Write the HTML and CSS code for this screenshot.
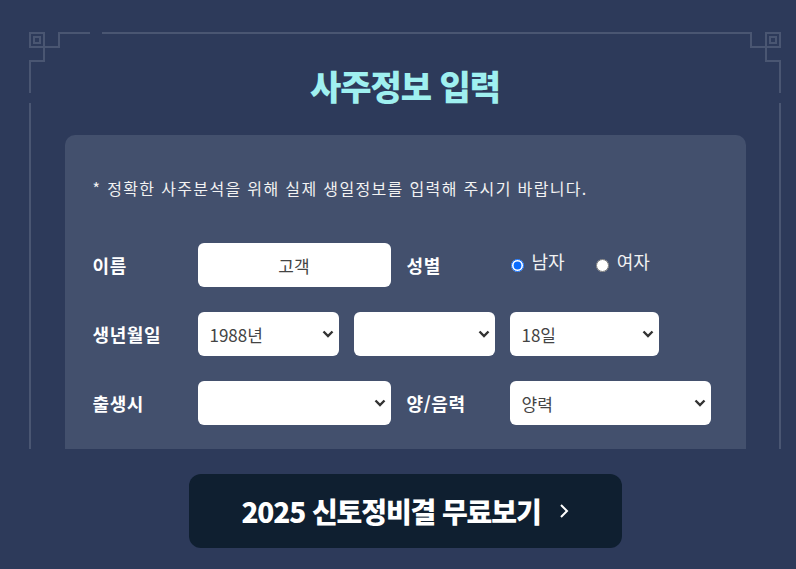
FILE: index.html
```html
<!DOCTYPE html>
<html lang="ko">
<head>
<meta charset="utf-8">
<link rel="stylesheet" href="styles.css">
</head>
<body>
<div class="wrap">
  <svg class="frame" width="810" height="449" viewBox="0 0 810 449" aria-hidden="true">
    <g class="frame-lines">
      <path d="M58 33 H90 M102 33 H752"/>
      <path d="M59 33 V47 H30 M44 33 V61 H30 V93 M30 103 V449"/>
      <rect x="30" y="33" width="14" height="14"/>
      <rect x="34" y="37" width="6" height="6"/>
      <g transform="translate(810 0) scale(-1 1)">
        <path d="M59 33 V47 H30 M44 33 V61 H30 V93 M30 103 V449"/>
        <rect x="30" y="33" width="14" height="14"/>
        <rect x="34" y="37" width="6" height="6"/>
      </g>
    </g>
  </svg>

  <h1 class="title">사주정보 입력</h1>

  <section class="card">
    <p class="notice">* 정확한 사주분석을 위해 실제 생일정보를 입력해 주시기 바랍니다.</p>

    <div class="row">
      <span class="label">이름</span>
      <input class="field field-name" type="text" value="고객">
      <span class="label label-2">성별</span>
      <div class="radios">
        <label class="radio"><input type="radio" name="gender" checked> 남자</label>
        <label class="radio"><input type="radio" name="gender"> 여자</label>
      </div>
    </div>

    <div class="row">
      <span class="label">생년월일</span>
      <div class="select sel-year"><select class="field"><option>1988년</option></select><svg class="chev" width="12" height="8" viewBox="0 0 12 8"><path d="M1.5 1.5 L6 6 L10.5 1.5"/></svg></div>
      <div class="select sel-month gap"><select class="field"><option></option></select><svg class="chev" width="12" height="8" viewBox="0 0 12 8"><path d="M1.5 1.5 L6 6 L10.5 1.5"/></svg></div>
      <div class="select sel-day gap"><select class="field"><option>18일</option></select><svg class="chev" width="12" height="8" viewBox="0 0 12 8"><path d="M1.5 1.5 L6 6 L10.5 1.5"/></svg></div>
    </div>

    <div class="row">
      <span class="label">출생시</span>
      <div class="select sel-time"><select class="field"><option></option></select><svg class="chev" width="12" height="8" viewBox="0 0 12 8"><path d="M1.5 1.5 L6 6 L10.5 1.5"/></svg></div>
      <span class="label label-2">양/음력</span>
      <div class="select sel-cal"><select class="field"><option>양력</option></select><svg class="chev" width="12" height="8" viewBox="0 0 12 8"><path d="M1.5 1.5 L6 6 L10.5 1.5"/></svg></div>
    </div>
  </section>

  <button class="cta" type="button">
    <span>2025 신토정비결 무료보기</span>
    <svg class="cta-arrow" width="10" height="16" viewBox="0 0 10 16"><path d="M2 2 L8 8 L2 14"/></svg>
  </button>
</div>
</body>
</html>
```
FILE: styles.css
```css
html, body {
  margin: 0;
  padding: 0;
  background: #2d3a5a;
  overflow: hidden;
}
body {
  font-family: "Noto Sans CJK KR", "Noto Sans", sans-serif;
  color: #fff;
}
.wrap {
  position: relative;
  width: 810px;
  height: 569px;
  padding-top: 62px;
  box-sizing: border-box;
}
.frame {
  position: absolute;
  left: 0;
  top: 0;
}
.frame-lines path,
.frame-lines rect {
  fill: none;
  stroke: #4a5672;
  stroke-width: 2;
}
.title {
  margin: 0;
  height: 48px;
  line-height: 48px;
  text-align: center;
  font-size: 34px;
  font-weight: 900;
  letter-spacing: -1px;
  color: #9ff0f0;
}
.card {
  position: relative;
  width: 681px;
  margin: 25px auto 0;
  box-sizing: border-box;
  padding: 42px 28px 24px;
  background: #43506d;
  border-radius: 10px 10px 0 0;
}
.notice {
  margin: 0 0 44px;
  height: 22px;
  line-height: 22px;
  font-size: 16px;
  letter-spacing: 1.35px;
  color: #f2f2f2;
}
.row {
  display: flex;
  align-items: center;
  height: 44px;
}
.row + .row {
  margin-top: 25px;
}
.label {
  width: 105px;
  flex: none;
  font-size: 18px;
  font-weight: 700;
  letter-spacing: 0.6px;
}
.label-2 {
  width: 103px;
  margin-left: 16px;
}
.field {
  height: 44px;
  box-sizing: border-box;
  border: none;
  border-radius: 6px;
  background: #fff;
  font-family: "Noto Sans CJK KR", "Noto Sans", sans-serif;
  font-size: 17px;
  color: #444;
  padding: 0 12px;
  outline: none;
}
.field-name {
  width: 193px;
  text-align: center;
}
.select {
  position: relative;
  flex: none;
  height: 44px;
}
.select select {
  width: 100%;
  appearance: none;
  -webkit-appearance: none;
}
.chev {
  position: absolute;
  right: 5px;
  top: 18px;
  pointer-events: none;
}
.chev path {
  fill: none;
  stroke: #333;
  stroke-width: 2.4;
}
.gap { margin-left: 15px; }
.sel-year, .sel-month { width: 141px; }
.sel-day { width: 149px; }
.sel-time { width: 193px; }
.sel-cal { width: 201px; }
.radios {
  display: flex;
  align-items: center;
  gap: 30px;
  margin-top: -9px;
}
.radio {
  display: flex;
  align-items: center;
  font-size: 18px;
  color: #f2f2f2;
}
.radio input {
  margin: 9px 8px 0 1px;
  width: 13px;
  height: 13px;
  accent-color: #0a6cff;
}
.cta {
  display: flex;
  align-items: center;
  justify-content: center;
  gap: 18px;
  width: 433px;
  height: 74px;
  margin: 25px auto 0;
  border: none;
  border-radius: 12px;
  background: #0f1f30;
  color: #fff;
  font-family: "Noto Sans CJK KR", "Noto Sans", sans-serif;
  font-size: 28px;
  font-weight: 900;
  letter-spacing: -1.1px;
  padding: 0;
}
.cta-arrow path {
  fill: none;
  stroke: #fff;
  stroke-width: 2;
}
```
